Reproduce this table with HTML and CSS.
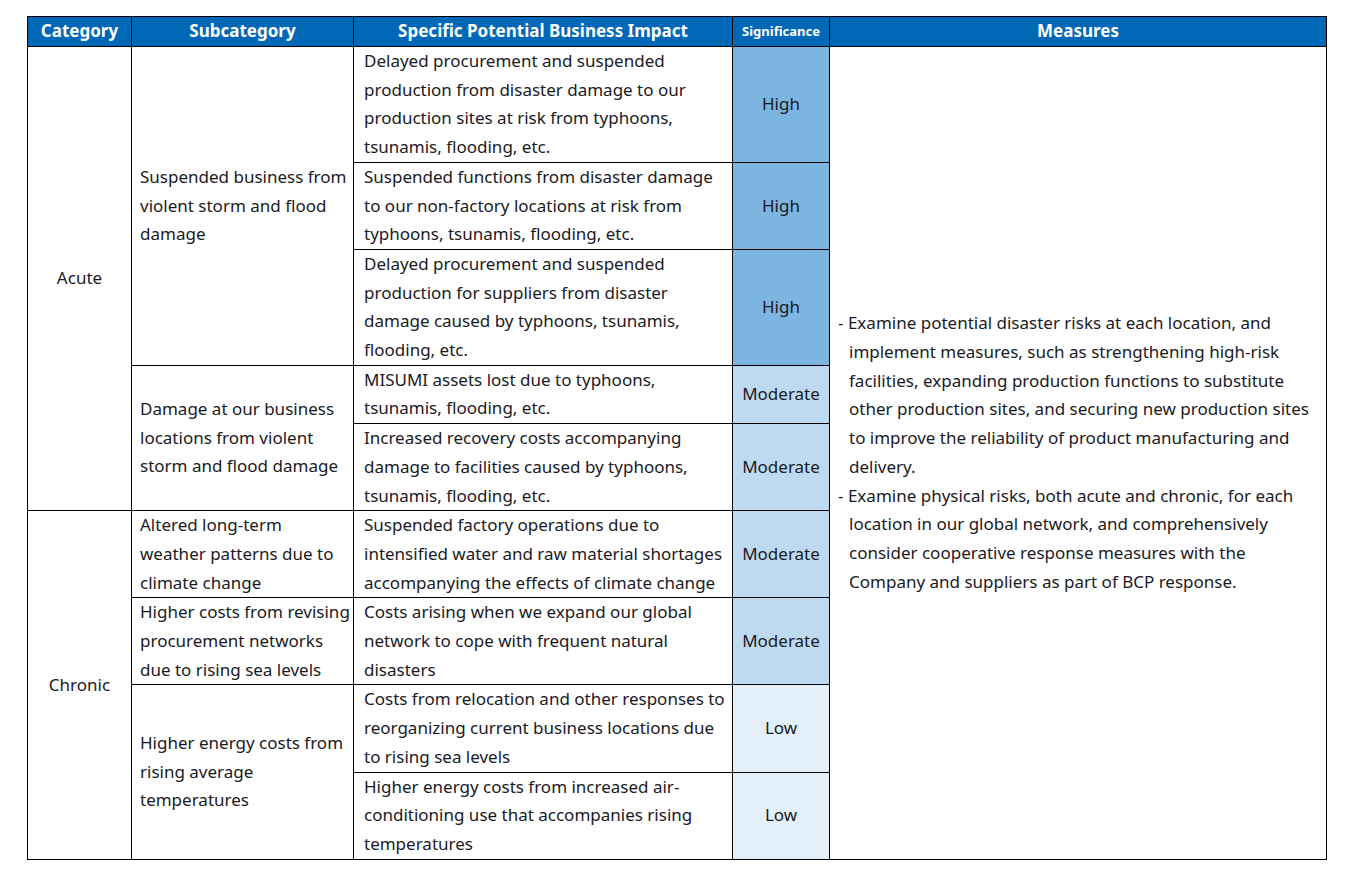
FILE: index.html
```html
<!DOCTYPE html>
<html lang="en">
<head>
<meta charset="utf-8">
<title>Physical Risks</title>
<link rel="stylesheet" href="styles.css">
</head>
<body>
<table class="risk">
  <colgroup>
    <col class="c-cat">
    <col class="c-sub">
    <col class="c-imp">
    <col class="c-sig">
    <col class="c-mea">
  </colgroup>
  <thead>
    <tr>
      <th>Category</th>
      <th>Subcategory</th>
      <th>Specific Potential Business Impact</th>
      <th class="th-small">Significance</th>
      <th>Measures</th>
    </tr>
  </thead>
  <tbody>
    <tr>
      <td class="cat" rowspan="5">Acute</td>
      <td class="sub" rowspan="3">Suspended business from violent storm and flood damage</td>
      <td class="imp">Delayed procurement and suspended production from disaster damage to our production sites at risk from typhoons, tsunamis, flooding, etc.</td>
      <td class="sig high">High</td>
      <td class="mea" rowspan="9">
        <ul class="measures">
          <li>Examine potential disaster risks at each location, and implement measures, such as strengthening high-risk facilities, expanding production functions to substitute other production sites, and securing new production sites to improve the reliability of product manufacturing and delivery.</li>
          <li>Examine physical risks, both acute and chronic, for each location in our global network, and comprehensively consider cooperative response measures with the Company and suppliers as part of BCP response.</li>
        </ul>
      </td>
    </tr>
    <tr>
      <td class="imp">Suspended functions from disaster damage to our non-factory locations at risk from typhoons, tsunamis, flooding, etc.</td>
      <td class="sig high">High</td>
    </tr>
    <tr>
      <td class="imp">Delayed procurement and suspended production for suppliers from disaster damage caused by typhoons, tsunamis, flooding, etc.</td>
      <td class="sig high">High</td>
    </tr>
    <tr>
      <td class="sub" rowspan="2">Damage at our business locations from violent storm and flood damage</td>
      <td class="imp">MISUMI assets lost due to typhoons, tsunamis, flooding, etc.</td>
      <td class="sig moderate">Moderate</td>
    </tr>
    <tr>
      <td class="imp">Increased recovery costs accompanying damage to facilities caused by typhoons, tsunamis, flooding, etc.</td>
      <td class="sig moderate">Moderate</td>
    </tr>
    <tr>
      <td class="cat" rowspan="4">Chronic</td>
      <td class="sub">Altered long-term weather patterns due to climate change</td>
      <td class="imp">Suspended factory operations due to intensified water and raw material shortages accompanying the effects of climate change</td>
      <td class="sig moderate">Moderate</td>
    </tr>
    <tr>
      <td class="sub">Higher costs from revising procurement networks due to rising sea levels</td>
      <td class="imp">Costs arising when we expand our global network to cope with frequent natural disasters</td>
      <td class="sig moderate">Moderate</td>
    </tr>
    <tr>
      <td class="sub" rowspan="2">Higher energy costs from rising average temperatures</td>
      <td class="imp">Costs from relocation and other responses to reorganizing current business locations due to rising sea levels</td>
      <td class="sig low">Low</td>
    </tr>
    <tr>
      <td class="imp">Higher energy costs from increased air-conditioning use that accompanies rising temperatures</td>
      <td class="sig low">Low</td>
    </tr>
  </tbody>
</table>
</body>
</html>
```
FILE: styles.css
```css
html, body {
  margin: 0;
  padding: 0;
  background: #ffffff;
}

body {
  font-family: "Noto Sans", "Open Sans", sans-serif;
  font-size: 17px;
  color: #1a1a24;
  padding: 16px 0 0 27px;
}

.risk {
  border-collapse: collapse;
  table-layout: fixed;
  width: 1299px;
}

.c-cat { width: 104px; }
.c-sub { width: 222px; }
.c-imp { width: 379px; }
.c-sig { width: 97px; }
.c-mea { width: 497px; }

.risk th,
.risk td {
  border: 1px solid #000;
  line-height: 28.7px;
  padding: 0 8px;
  vertical-align: middle;
  text-align: left;
}

.risk th {
  background: #0068b7;
  color: #ffffff;
  font-weight: 700;
  text-align: center;
  height: 29px;
  line-height: 28.5px;
  padding-top: 0;
  padding-bottom: 0;
  white-space: nowrap;
}

.risk th.th-small {
  font-size: 13px;
  padding: 0;
}

.risk td.cat {
  text-align: center;
}

.risk td.sub {
  padding: 0 2px 0 8px;
}

.risk td.imp {
  padding: 0 4px 0 10px;
}

.risk td.sig {
  text-align: center;
  padding: 0;
}

.high { background: #7db5e1; }
.moderate { background: #bddaf0; }
.low { background: #e3eff9; }

.measures {
  list-style: none;
  margin: 0;
  padding: 0 0 0 11px;
}

.measures li {
  text-indent: -11px;
}

.measures li::before {
  content: "- ";
}
```
